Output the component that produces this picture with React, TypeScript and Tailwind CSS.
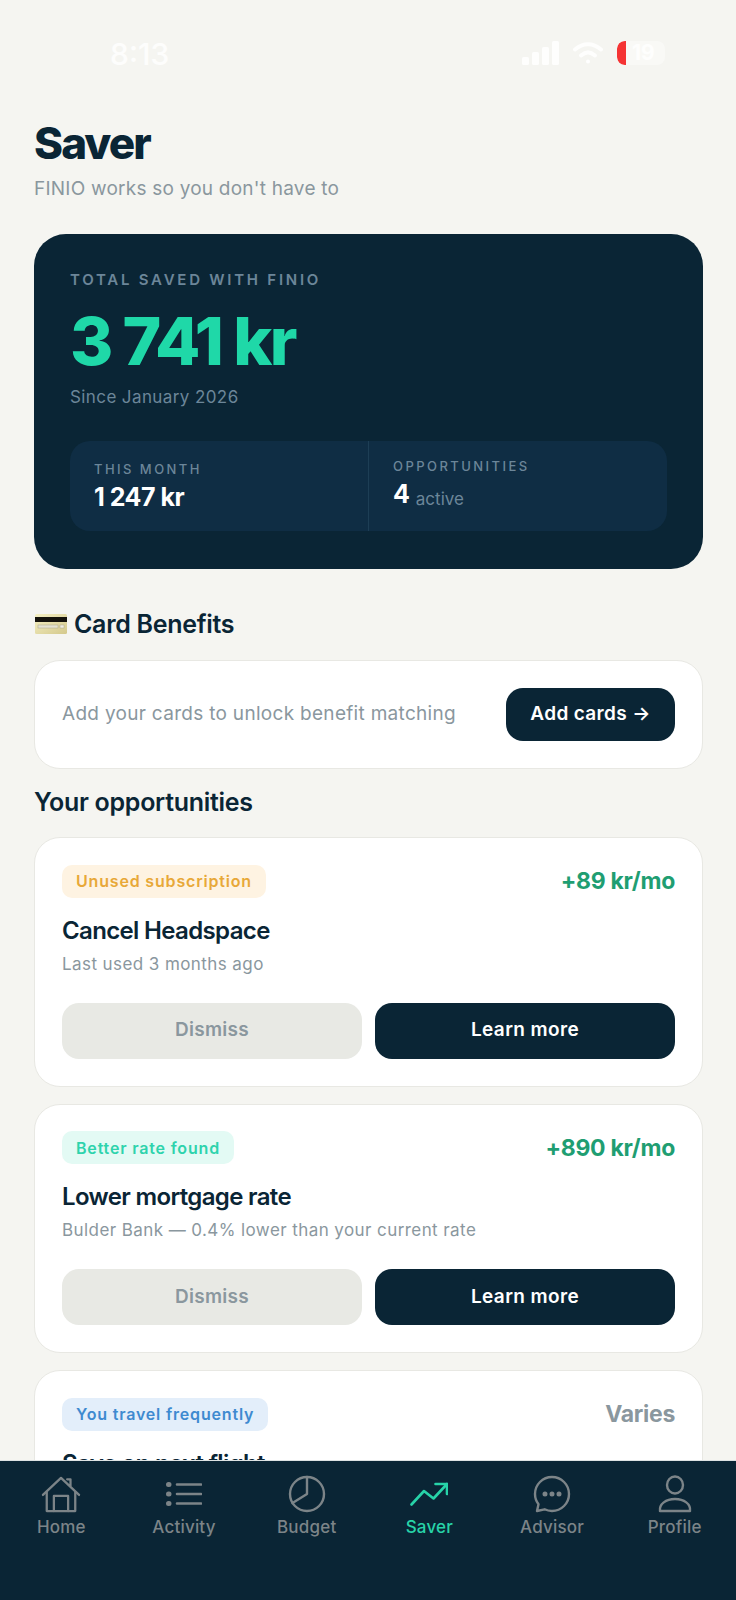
import React from "react";

function Opportunity(props: { chip: string; chipCls: string; amount: string; amountCls: string; title: string; sub?: string; first?: boolean }) {
  return (
    <div className={(props.first ? "mt-[19px]" : "mt-[17px]") + " rounded-[26px] border-[1.5px] border-[#E8E8E3] bg-white px-[27px] pt-[26px] pb-[27px]"}>
      <div className="flex items-center justify-between">
        <span className={"flex h-[33px] items-center rounded-[10px] px-[14px] text-[16px] font-semibold tracking-[0.82px] " + props.chipCls}>{props.chip}</span>
        <span className={"text-[23px] font-bold tracking-[-0.3px] " + props.amountCls}>{props.amount}</span>
      </div>
      <div className="mt-[16px] text-[24px] leading-[32px] font-semibold tracking-[-0.65px] text-[#0A2535]">{props.title}</div>
      {props.sub && <div className="mt-[5px] text-[17px] leading-[24px] tracking-[0.42px] text-[#8A979E]">{props.sub}</div>}
      {props.sub && (
        <div className="mt-[27px] flex gap-[13px]">
          <button className="flex h-[56px] flex-1 items-center justify-center rounded-[17px] bg-[#E8E9E4] text-[19px] font-semibold tracking-[0.3px] text-[#8A979E]">Dismiss</button>
          <button className="flex h-[56px] flex-1 items-center justify-center rounded-[17px] bg-[#0A2535] text-[19px] font-semibold tracking-[0.4px] text-white">Learn more</button>
        </div>
      )}
    </div>
  );
}

function NavItem(props: { label: string; active?: boolean; children: React.ReactNode }) {
  return (
    <div className={"flex flex-1 flex-col items-center " + (props.active ? "text-[#27D3A8]" : "text-[#7C8488]")}>
      <div className="flex h-[44px] w-[44px] items-center justify-center">{props.children}</div>
      <div className="text-[17px] leading-[22px] font-medium tracking-[0.2px]">{props.label}</div>
    </div>
  );
}

const stroke = { fill: "none", stroke: "currentColor", strokeWidth: 2.4, strokeLinecap: "round" as const, strokeLinejoin: "round" as const };

export default function App() {
  return (
    <div className="relative h-[1600px] w-[736px] overflow-hidden bg-[#F5F5F1] font-['Inter',sans-serif]">
      <div className="flex h-[115px] items-start justify-between pt-[36px] pr-[71px] pl-[110px]">
        <span className="text-[30px] leading-[36px] font-medium text-white/80">8:13</span>
        <div className="flex items-center gap-[14px] pt-[5px]">
          <svg width="37" height="24" viewBox="0 0 37 24" fill="#ffffff" fillOpacity="0.85"><rect x="0" y="16" width="7" height="8" rx="1.5"/><rect x="10" y="11" width="7" height="13" rx="1.5"/><rect x="20" y="6" width="7" height="18" rx="1.5"/><rect x="30" y="0" width="7" height="24" rx="1.5"/></svg>
          <svg width="30" height="24" viewBox="0 0 30 24" fill="none" stroke="#ffffff" strokeOpacity="0.85" strokeWidth="4" strokeLinecap="round"><path d="M2 8.500C10 1.500 20 1.500 28 8.500"/><path d="M8 14.500c4.500-4 9.500-4 14 0"/><circle cx="15" cy="20.500" r="2" fill="#ffffff" stroke="none"/></svg>
          <div className="flex h-[24px] w-[48px] items-center overflow-hidden rounded-[8px] bg-white/40">
            <div className="h-full w-[9px] rounded-l-[7px] bg-[#F53333]"></div>
            <span className="ml-[6px] text-[21px] leading-[24px] font-bold text-white/80">19</span>
          </div>
        </div>
      </div>

      <div className="pr-[33px] pl-[34px]">
        <h1 className="text-[44px] leading-[56px] font-extrabold tracking-[-1.9px] text-[#0A2535]">Saver</h1>
        <p className="mt-[6px] text-[19px] leading-[24px] tracking-[0.23px] text-[#8A979E]">FINIO works so you don't have to</p>

        <div className="mt-[33px] rounded-[32px] bg-[#0A2535] px-[36px] pt-[36px] pb-[38px]">
          <div className="text-[15px] leading-[20px] font-semibold tracking-[2.75px] text-[#6C8699]">TOTAL SAVED WITH FINIO</div>
          <div className="mt-[13px] text-[66px] leading-[76px] font-extrabold tracking-[-2.6px] text-[#1FD8A8]">3 741 kr</div>
          <div className="mt-[6px] text-[17px] leading-[24px] tracking-[0.4px] text-[#6C8699]">Since January 2026</div>
          <div className="mt-[32px] flex h-[90px] rounded-[20px] bg-[#0F2D44]">
            <div className="flex flex-1 flex-col justify-center border-r border-[#1D3E55] pl-[24px]">
              <div className="text-[13px] leading-[18px] font-medium tracking-[2.45px] text-[#6C8699]">THIS MONTH</div>
              <div className="mt-[3px] text-[25px] leading-[32px] font-bold tracking-[-0.5px] text-white">1 247 kr</div>
            </div>
            <div className="flex flex-1 flex-col justify-center pl-[24px]">
              <div className="text-[13px] leading-[18px] font-medium tracking-[2.45px] text-[#6C8699]">OPPORTUNITIES</div>
              <div className="mt-[3px] text-[25px] leading-[32px] font-bold text-white">4 <span className="align-[-2px] text-[17px] font-normal tracking-[0px] text-[#6C8699]">active</span></div>
            </div>
          </div>
        </div>

        <div className="mt-[39px] flex items-center gap-[7px] pl-[1px]">
          <svg width="32" height="22" viewBox="0 0 32 22">
            <defs><linearGradient id="gold" x1="0" y1="0" x2="1" y2="1"><stop offset="0" stopColor="#F5F0C4"/><stop offset="1" stopColor="#D4C98C"/></linearGradient></defs>
            <rect x="0" y="1" width="32" height="20" rx="1.5" fill="url(#gold)"/>
            <rect x="0" y="4" width="32" height="5" fill="#15130C"/>
            <rect x="3" y="12" width="20" height="3" fill="#E6E3D0" stroke="#A8A48C" strokeWidth="0.5"/>
            <rect x="25" y="12" width="4" height="3" fill="#F2EFE0" stroke="#A8A48C" strokeWidth="0.5"/>
          </svg>
          <h2 className="text-[25px] leading-[32px] font-semibold tracking-[-0.3px] text-[#0A2535]">Card Benefits</h2>
        </div>
        <div className="mt-[20px] flex h-[109px] items-center justify-between rounded-[26px] border-[1.5px] border-[#E8E8E3] bg-white px-[27px]">
          <span className="text-[19px] tracking-[0.3px] text-[#8A979E]">Add your cards to unlock benefit matching</span>
          <button className="flex h-[53px] w-[169px] items-center justify-center rounded-[17px] bg-[#0A2535] text-[19px] font-semibold tracking-[0.35px] text-white">Add cards →</button>
        </div>

        <h2 className="mt-[17px] text-[25px] leading-[32px] font-semibold tracking-[-0.3px] text-[#0A2535]">Your opportunities</h2>

        <Opportunity first chip="Unused subscription" chipCls="bg-[#FEF3E2] text-[#E8A838]" amount="+89 kr/mo" amountCls="text-[#1F9E72]" title="Cancel Headspace" sub="Last used 3 months ago" />
        <Opportunity chip="Better rate found" chipCls="bg-[#E3FAF4] text-[#2ED3AC]" amount="+890 kr/mo" amountCls="text-[#1F9E72]" title="Lower mortgage rate" sub="Bulder Bank — 0.4% lower than your current rate" />
        <Opportunity chip="You travel frequently" chipCls="bg-[#E3EEFA] text-[#3E8AD0]" amount="Varies" amountCls="text-[#8A979E]" title="Save on next flight" />
      </div>

      <nav className="absolute right-0 bottom-0 left-0 flex h-[140px] items-start border-t border-[#DDE2E3] bg-[#0A2535] pt-[11px]">
        <NavItem label="Home">
          <svg width="40" height="38" viewBox="0 0 42 40" {...stroke}><path d="M2 21 21 3l10 9.500M40 21l-9-8.500V4.500h-3.500"/><path d="M6 18v20h30V18"/><path d="M13.500 38V22h15v16"/></svg>
        </NavItem>
        <NavItem label="Activity">
          <svg width="36" height="26" viewBox="0 0 36 26" {...stroke} strokeWidth={2.6}><path d="M11 3.500h24M11 13h24M11 22.500h24"/><path d="M2.500 3.500h.5M2.500 13h.5M2.500 22.500h.5" strokeWidth={5}/></svg>
        </NavItem>
        <NavItem label="Budget">
          <svg width="38" height="38" viewBox="0 0 38 38" {...stroke}><circle cx="19" cy="19" r="17"/><path d="M19 2v17L4.500 28"/></svg>
        </NavItem>
        <NavItem label="Saver" active>
          <svg width="38" height="24" viewBox="0 0 38 24" {...stroke} strokeWidth={2.6}><path d="M1.500 22.500 14 9l9.500 7.500L37 2"/><path d="M25.500 2H37v10"/></svg>
        </NavItem>
        <NavItem label="Advisor">
          <svg width="38" height="38" viewBox="0 0 38 38" {...stroke}><path d="M19 2c9.400 0 17 7.600 17 17s-7.600 17-17 17c-2.700 0-5.200-.6-7.400-1.700L4 36l1.500-6.700C3.300 26.400 2 22.900 2 19 2 9.600 9.600 2 19 2Z"/><circle cx="12" cy="19" r="1.300" fill="currentColor"/><circle cx="19" cy="19" r="1.300" fill="currentColor"/><circle cx="26" cy="19" r="1.300" fill="currentColor"/></svg>
        </NavItem>
        <NavItem label="Profile">
          <svg width="36" height="38" viewBox="0 0 36 38" {...stroke}><ellipse cx="18" cy="10" rx="8" ry="8.500"/><path d="M3 36c-1-7 6-12 15-12s16 5 15 12Z"/></svg>
        </NavItem>
      </nav>
    </div>
  );
}
